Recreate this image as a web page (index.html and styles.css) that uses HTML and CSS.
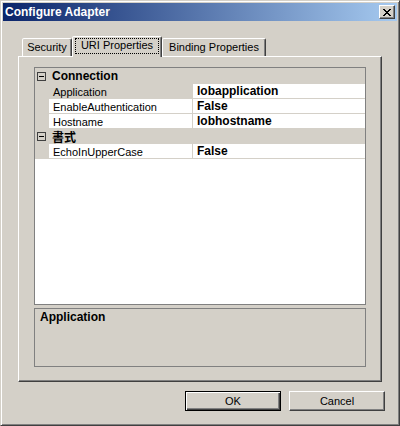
FILE: index.html
```html
<!DOCTYPE html>
<html>
<head>
<meta charset="utf-8">
<link rel="stylesheet" href="styles.css">
</head>
<body>
<div class="window">
  <div class="titlebar">
    <span class="title">Configure Adapter</span>
    <span class="close"><svg width="8" height="7" viewBox="0 0 8 7" shape-rendering="crispEdges"><path fill="#000" d="M0 0h2v1H0zM6 0h2v1H6zM1 1h2v1H1zM5 1h2v1H5zM2 2h4v1H2zM3 3h2v1H3zM2 4h4v1H2zM1 5h2v1H1zM5 5h2v1H5zM0 6h2v1H0zM6 6h2v1H6z"/></svg></span>
  </div>
  <div class="tabs">
    <div class="tab t-security">Security</div>
    <div class="tab t-uri active"><span class="focus">URI Properties</span></div>
    <div class="tab t-binding">Binding Properties</div>
  </div>
  <div class="panel">
    <div class="grid">
      <div class="rows">
        <div class="cat"><svg class="box" width="9" height="9" viewBox="0 0 9 9" shape-rendering="crispEdges"><rect x="0.5" y="0.5" width="8" height="8" fill="none" stroke="#404040"/><path d="M2 4h5v1H2z" fill="#000"/></svg><span>Connection</span></div>
        <div class="row selected"><span class="gut"></span><span class="lbl">Application</span><span class="val">lobapplication</span></div>
        <div class="row"><span class="gut"></span><span class="lbl">EnableAuthentication</span><span class="val">False</span></div>
        <div class="row"><span class="gut"></span><span class="lbl">Hostname</span><span class="val">lobhostname</span></div>
        <div class="cat"><svg class="box" width="9" height="9" viewBox="0 0 9 9" shape-rendering="crispEdges"><rect x="0.5" y="0.5" width="8" height="8" fill="none" stroke="#404040"/><path d="M2 4h5v1H2z" fill="#000"/></svg><span class="cjk">書式</span></div>
        <div class="row"><span class="gut"></span><span class="lbl">EchoInUpperCase</span><span class="val">False</span></div>
      </div>
    </div>
    <div class="help">Application</div>
  </div>
  <div class="buttons">
    <button class="btn default">OK</button>
    <button class="btn">Cancel</button>
  </div>
</div>
</body>
</html>
```
FILE: styles.css
```css
body {
  margin: 0;
  background: #d4d0c8;
  font-family: "Liberation Sans", Arial, sans-serif;
  font-size: 11px;
  color: #000;
}

.window {
  width: 400px;
  height: 426px;
  box-sizing: border-box;
  background: #d4d0c8;
  border: 1px solid;
  border-color: #d4d0c8 #404040 #404040 #d4d0c8;
  box-shadow: inset 1px 1px #fff, inset -1px -1px #808080;
  padding: 2px;
}

.titlebar {
  height: 18px;
  display: flex;
  align-items: center;
  justify-content: space-between;
  padding: 0 2px;
  background: linear-gradient(to right, #0a246a, #a6caf0);
}

.title {
  color: #fff;
  font-weight: bold;
  font-size: 12px;
  line-height: 18px;
}

.close {
  width: 16px;
  height: 14px;
  box-sizing: border-box;
  background: #d4d0c8;
  border: 1px solid;
  border-color: #fff #404040 #404040 #fff;
  box-shadow: inset -1px -1px #808080;
  display: flex;
  align-items: center;
  justify-content: center;
  padding-right: 1px;
}

.tabs {
  display: flex;
  align-items: flex-end;
  height: 20px;
  margin: 15px 0 0 19px;
}

.tab {
  height: 18px;
  box-sizing: border-box;
  border: 1px solid;
  border-bottom: none;
  border-color: #fff #404040 transparent #fff;
  border-radius: 2px 2px 0 0;
  box-shadow: inset -1px 0 #808080;
  padding-top: 2px;
  line-height: 13px;
  text-align: center;
  background: #d4d0c8;
}

.t-security { width: 50px; }
.t-uri { width: 90px; }
.t-binding { width: 104px; }

.tab.active {
  height: 21px;
  margin-bottom: -1px;
  padding: 1px 2px 0 2px;
  position: relative;
  z-index: 1;
}

.focus {
  display: block;
  border: 1px dotted #000;
  line-height: 13px;
  padding-bottom: 1px;
}

.panel {
  margin: 0 15px;
  height: 326px;
  box-sizing: border-box;
  border: 1px solid;
  border-color: #fff #404040 #404040 #fff;
  box-shadow: inset -1px -1px #808080;
  padding: 10px 15px 14px;
  display: flex;
  flex-direction: column;
  gap: 3px;
}

.grid {
  height: 238px;
  box-sizing: border-box;
  border: 1px solid #808080;
  background: #fff;
}

.rows {
  background: #d4d0c8;
  padding-top: 1px;
}

.cat {
  height: 15px;
  display: flex;
  align-items: center;
  gap: 6px;
  padding-left: 2px;
  font-weight: bold;
  font-size: 12px;
  line-height: 15px;
}

.box { display: block; }

.cjk {
  font-family: "Noto Sans CJK JP", sans-serif;
  font-size: 12px;
  font-weight: bold;
}

.row {
  height: 15px;
  display: flex;
}

.gut {
  width: 14px;
  flex: none;
}

.lbl {
  width: 143px;
  height: 14px;
  box-sizing: border-box;
  margin-right: 1px;
  padding: 2px 0 0 4px;
  line-height: 12px;
  background: #fff;
  white-space: nowrap;
  overflow: hidden;
}

.row.selected .lbl {
  background: #d4d0c8;
}

.val {
  flex: 1;
  height: 14px;
  padding-left: 4px;
  line-height: 14px;
  font-weight: bold;
  font-size: 12px;
  background: #fff;
}

.help {
  height: 59px;
  box-sizing: border-box;
  border: 1px solid #808080;
  padding: 1px 5px;
  font-weight: bold;
  font-size: 12px;
  line-height: 14px;
}

.buttons {
  display: flex;
  justify-content: flex-end;
  gap: 8px;
  margin: 9px 12px 0 0;
}

.btn {
  width: 96px;
  height: 20px;
  box-sizing: border-box;
  padding: 0;
  font-family: "Liberation Sans", Arial, sans-serif;
  font-size: 11px;
  color: #000;
  background: #d4d0c8;
  border: 1px solid;
  border-color: #fff #404040 #404040 #fff;
  box-shadow: inset -1px -1px #808080;
}

.btn.default {
  border: 1px solid #000;
  box-shadow: inset 1px 1px #fff, inset -1px -1px #404040, inset -2px -2px #808080;
}
```
